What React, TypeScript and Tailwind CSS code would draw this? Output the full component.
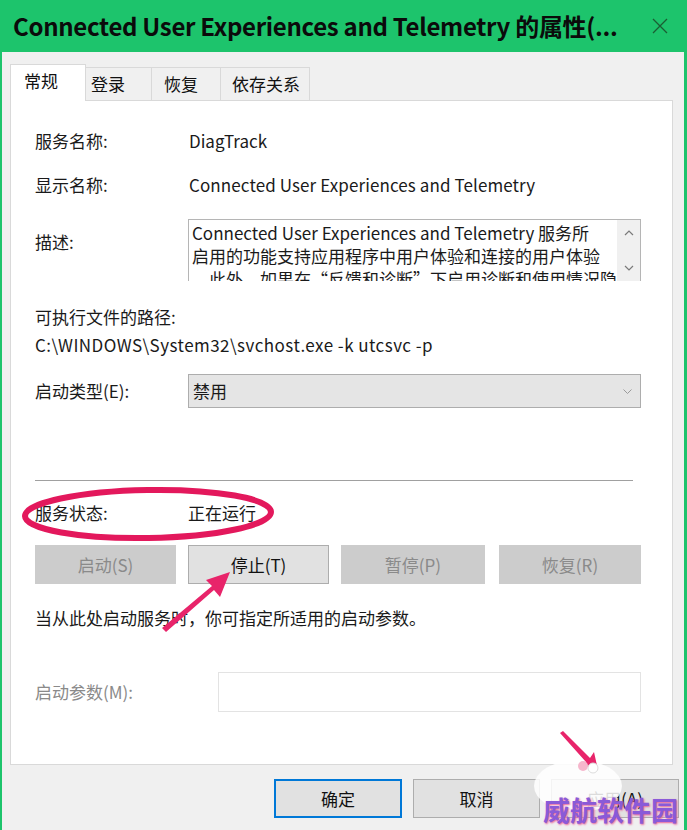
const ui = { fontFamily: '"Noto Sans CJK SC", "Noto Sans", sans-serif' };

function Btn({ label, disabled, primary }: { label: string; disabled?: boolean; primary?: boolean }) {
  return (
    <div
      className={
        "flex items-center justify-center h-full border text-[17px] " +
        (disabled
          ? "bg-[#cccccc] border-[#cccccc] text-[#8a8a8a]"
          : primary
          ? "bg-[#e1e1e1] border-[#0078d7] border-2 text-[#111]"
          : "bg-[#e1e1e1] border-[#adadad] text-[#111]")
      }
    >
      {label}
    </div>
  );
}

function Annotations() {
  return (
    <svg className="absolute inset-0 pointer-events-none" width="687" height="830">
      {/* ellipse around status */}
      <ellipse cx="148" cy="514" rx="123" ry="24" fill="none" stroke="#e3185c" strokeWidth="6" transform="rotate(-1 148 514)" />
      {/* arrow to stop button */}
      <polygon points="162,628 166,632 214,590 220,597 230,572 206,580 212,586" fill="#e8246a" />
      {/* white blob + small arrow bottom right */}
      <ellipse cx="578" cy="786" rx="44" ry="26" fill="#ffffff" opacity="0.85" />
      <polygon points="560,733 563,731 590,758 594,752 598,770 582,765 586,762" fill="#e8246a" />
      <circle cx="583" cy="766" r="5" fill="#f6b6cc" />
      <circle cx="593" cy="768" r="5" fill="#ffffff" stroke="#dddddd" />
    </svg>
  );
}

export default function App() {
  return (
    <div className="relative w-[687px] h-[830px] overflow-hidden bg-[#f0f0f0]" style={ui}>
      {/* title bar */}
      <div className="h-[52px] bg-[#1dc46c] flex items-center justify-between pl-[13px] pr-[18px]">
        <div className="text-[24px] font-bold text-[#0b0b0b] tracking-[-0.3px] whitespace-nowrap">
          Connected User Experiences and Telemetry 的属性(...
        </div>
        <svg width="18" height="18" viewBox="0 0 18 18" className="text-[#1b5e33] shrink-0">
          <path d="M2 2 L16 16 M16 2 L2 16" stroke="currentColor" strokeWidth="1.3" />
        </svg>
      </div>

      <div className="h-[778px] border-l-2 border-r-[3px] border-[#1dc46c] flex flex-col">
        {/* tabs */}
        <div className="pl-[8px] pt-[12px] flex items-end text-[17px] text-[#111]">
          <div className="w-[76px] h-[37px] bg-white border border-[#d9d9d9] border-b-0 flex items-center pl-[13px] pb-[4px] relative z-10 -mb-px">常规</div>
          <div className="w-[66px] h-[33px] border border-l-0 border-[#d9d9d9] border-b-0 flex items-center pl-[5px]">登录</div>
          <div className="w-[69px] h-[33px] border border-l-0 border-[#d9d9d9] border-b-0 flex items-center pl-[12px]">恢复</div>
          <div className="w-[89px] h-[33px] border border-l-0 border-[#d9d9d9] border-b-0 flex items-center pl-[11px]">依存关系</div>
        </div>

        {/* panel */}
        <div className="ml-[8px] w-[663px] h-[665px] bg-white border border-[#d9d9d9] pl-[24px] pr-[31px] pt-[23px] text-[17px] text-[#1a1a1a] flex flex-col">
          <div className="h-[34px] flex items-center">
            <div className="w-[154px]">服务名称:</div>
            <div>DiagTrack</div>
          </div>
          <div className="h-[34px] mt-[10px] flex items-center">
            <div className="w-[154px]">显示名称:</div>
            <div className="tracking-[0.1px]">Connected User Experiences and Telemetry</div>
          </div>
          <div className="mt-[17px] flex">
            <div className="w-[153px] pt-[10px]">描述:</div>
            <div className="flex-1 h-[62px] border border-[#b5b5b5] border-b-0 flex overflow-hidden">
              <div className="flex-1 pl-[3px] leading-[23px] pt-[1px] overflow-hidden whitespace-nowrap">
                <div>Connected User Experiences and Telemetry 服务所</div>
                <div>启用的功能支持应用程序中用户体验和连接的用户体验</div>
                <div>。此外，如果在“反馈和诊断”下启用诊断和使用情况隐</div>
              </div>
              <div className="w-[23px] bg-[#f0f0f0] flex flex-col items-center justify-between py-[10px] text-[#7a7a7a]">
                <svg width="10" height="6" viewBox="0 0 10 6"><path d="M1 5 L5 1 L9 5" fill="none" stroke="currentColor" strokeWidth="1.2" /></svg>
                <svg width="10" height="6" viewBox="0 0 10 6"><path d="M1 1 L5 5 L9 1" fill="none" stroke="currentColor" strokeWidth="1.2" /></svg>
              </div>
            </div>
          </div>
          <div className="mt-[24px] leading-[24px]">可执行文件的路径:</div>
          <div className="leading-[24px] mt-[4px] tracking-[0.45px]">C:\WINDOWS\System32\svchost.exe -k utcsvc -p</div>
          <div className="mt-[17px] flex items-center">
            <div className="w-[153px]">启动类型(E):</div>
            <div className="flex-1 h-[34px] bg-[#e5e5e5] border border-[#adadad] flex items-center justify-between pl-[4px] pr-[8px]">
              <span>禁用</span>
              <svg width="9" height="5" viewBox="0 0 9 5" className="text-[#9a9a9a]"><path d="M0.5 0.5 L4.5 4.5 L8.5 0.5" fill="none" stroke="currentColor" /></svg>
            </div>
          </div>
          <div className="mt-[72px] mr-[8px] h-px bg-[#a0a0a0]" />
          <div className="mt-[20px] h-[24px] flex items-center">
            <div className="w-[153px]">服务状态:</div>
            <div>正在运行</div>
          </div>
          <div className="mt-[20px] h-[39px] flex">
            <div className="w-[141px]"><Btn label="启动(S)" disabled /></div>
            <div className="w-[141px] ml-[12px]"><Btn label="停止(T)" /></div>
            <div className="w-[144px] ml-[12px]"><Btn label="暂停(P)" disabled /></div>
            <div className="w-[142px] ml-[14px]"><Btn label="恢复(R)" disabled /></div>
          </div>
          <div className="mt-[22px] leading-[24px]">当从此处启动服务时，你可指定所适用的启动参数。</div>
          <div className="mt-[42px] flex items-center">
            <div className="w-[183px] text-[#8a8a8a]">启动参数(M):</div>
            <div className="flex-1 h-[40px] border border-[#e3e3e3]" />
          </div>
        </div>

        {/* bottom buttons */}
        <div className="mt-[14px] h-[39px] flex pl-[272px]">
          <div className="w-[128px]"><Btn label="确定" primary /></div>
          <div className="w-[127px] ml-[11px]"><Btn label="取消" /></div>
          <div className="w-[128px] ml-[11px]"><Btn label="应用(A)" /></div>
        </div>
      </div>

      <Annotations />
      <div className="absolute left-[543px] top-[796px] text-[27px] font-bold text-[#8a5ad8] tracking-[0px] leading-none whitespace-nowrap [text-shadow:1px_1px_2px_#e8609a]">
        威航软件园
      </div>
    </div>
  );
}
